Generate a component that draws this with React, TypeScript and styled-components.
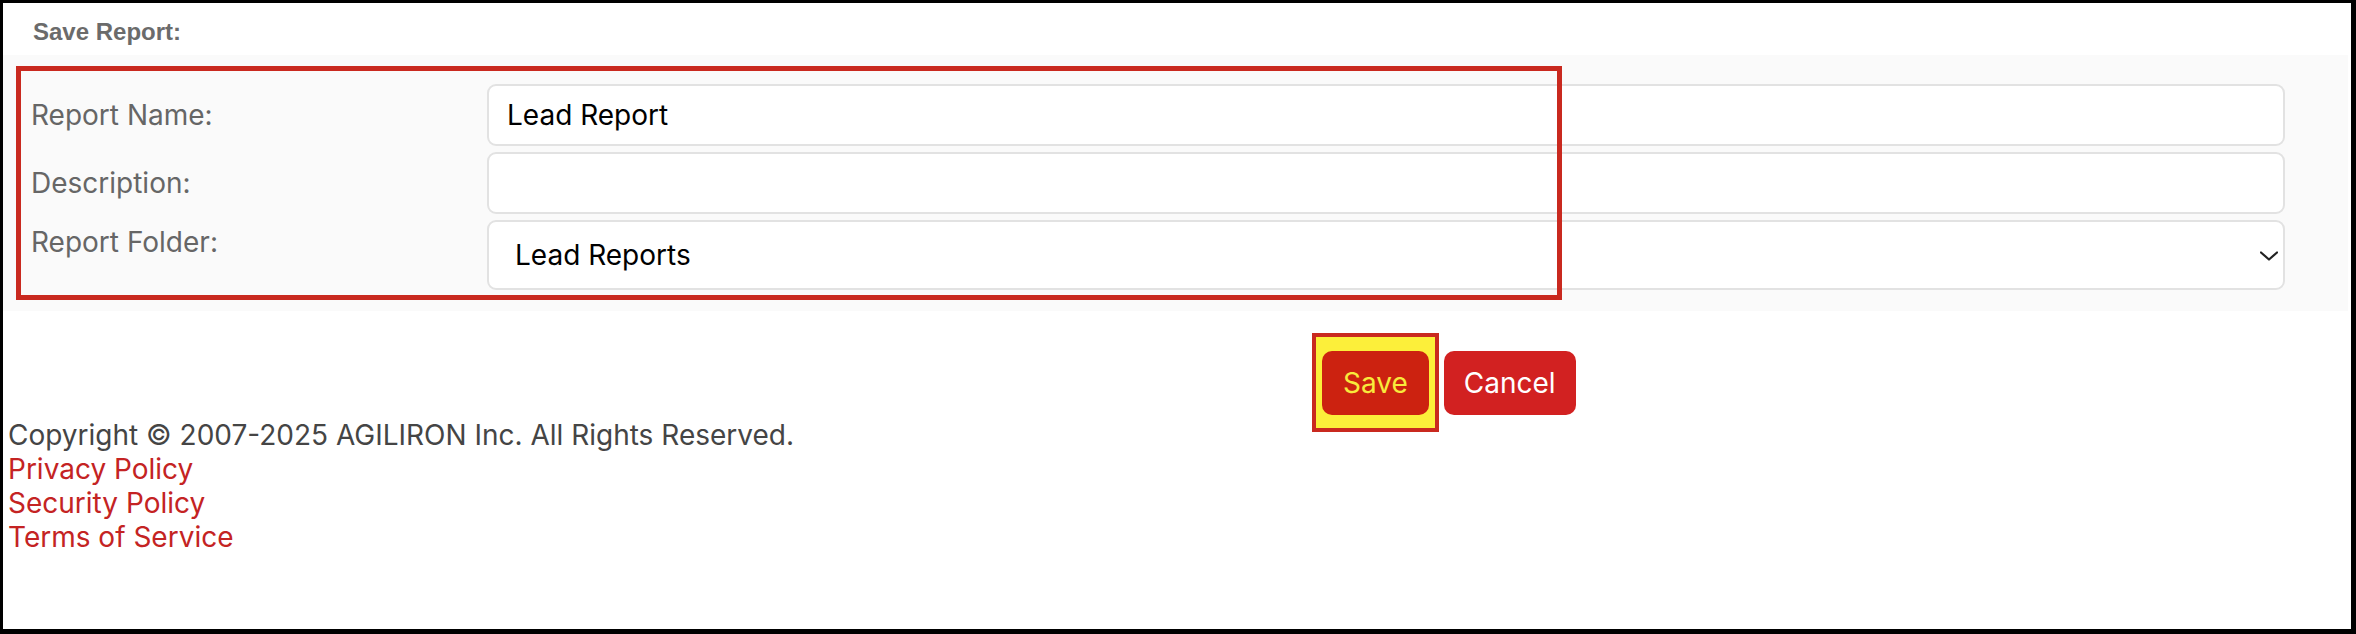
import React from 'react';
import styled, { createGlobalStyle } from 'styled-components';

const GlobalStyle = createGlobalStyle`
  html, body {
    margin: 0;
    padding: 0;
    background: #ffffff;
  }
  * {
    box-sizing: border-box;
  }
`;

const Frame = styled.div`
  width: 2356px;
  height: 634px;
  border-style: solid;
  border-color: #000000;
  border-width: 3px 5px 5px 3px;
  background: #ffffff;
  font-family: Inter, 'Noto Sans', sans-serif;
  display: flex;
  flex-direction: column;
  overflow: hidden;
`;

const Header = styled.div`
  height: 52px;
  display: flex;
  align-items: center;
  padding: 5px 0 0 30px;
  font-family: 'Liberation Sans', Arial, sans-serif;
  font-weight: 700;
  font-size: 24px;
  color: #6b6b6b;
`;

const Panel = styled.div`
  position: relative;
  margin-right: 3px;
  background: #fafafa;
  padding: 29px 63px 21px 28px;
  display: grid;
  grid-template-columns: 456px 1fr;
  row-gap: 6px;
`;

const Highlight = styled.div`
  position: absolute;
  top: 11px;
  left: 13px;
  width: 1546px;
  height: 234px;
  border: 5px solid #c9291f;
  pointer-events: none;
`;

const Label = styled.label<{ $top?: boolean }>`
  font-size: 28px;
  line-height: 34px;
  color: #666666;
  align-self: ${p => (p.$top ? 'start' : 'center')};
  margin-top: ${p => (p.$top ? '5px' : '0')};
`;

const TextInput = styled.input`
  height: 62px;
  width: 100%;
  border: 2px solid #e2e2e2;
  border-radius: 9px;
  background: #ffffff;
  padding: 0 18px;
  font-family: Inter, sans-serif;
  font-size: 28px;
  color: #000000;
  outline: none;
`;

const SelectWrap = styled.div`
  position: relative;
  height: 70px;
`;

const Select = styled.select`
  appearance: none;
  -webkit-appearance: none;
  width: 100%;
  height: 100%;
  border: 2px solid #e2e2e2;
  border-radius: 9px;
  background: #ffffff;
  padding: 0 26px;
  font-family: Inter, sans-serif;
  font-size: 28px;
  color: #000000;
  outline: none;
`;

const Chevron = styled.svg`
  position: absolute;
  right: 7px;
  top: 31px;
  width: 18px;
  height: 10px;
  pointer-events: none;
`;

const ButtonRow = styled.div`
  display: flex;
  gap: 15px;
  margin-top: 40px;
  padding-left: 1319px;
`;

const SaveMark = styled.span`
  position: relative;
  display: inline-flex;

  &::before {
    content: '';
    position: absolute;
    inset: -18px -10px -17px -10px;
    background: #fcef3a;
    border: 4px solid #c9291f;
  }
`;

const Button = styled.button<{ $primary?: boolean }>`
  position: relative;
  height: 64px;
  padding: 0 ${p => (p.$primary ? '21px' : '20px')};
  border: none;
  border-radius: 10px;
  background: ${p => (p.$primary ? '#cc2210' : '#d22121')};
  color: ${p => (p.$primary ? '#f8ea3c' : '#ffffff')};
  font-family: Inter, sans-serif;
  font-size: 28px;
  cursor: pointer;
`;

const Footer = styled.div`
  margin-top: 3px;
  padding-left: 5px;
  display: flex;
  flex-direction: column;
  font-size: 28px;
  line-height: 34px;
  position: relative;
`;

const Copyright = styled.div`
  color: #454545;
`;

const FooterLink = styled.a`
  color: #c42323;
  text-decoration: none;
`;

const App: React.FC = () => {
  return (
    <>
      <GlobalStyle />
      <Frame>
        <Header>Save Report:</Header>
        <Panel>
          <Label htmlFor="reportName">Report Name:</Label>
          <TextInput id="reportName" defaultValue="Lead Report" />
          <Label htmlFor="description">Description:</Label>
          <TextInput id="description" defaultValue="" />
          <Label htmlFor="folder" $top>Report Folder:</Label>
          <SelectWrap>
            <Select id="folder" defaultValue="lead">
              <option value="lead">Lead Reports</option>
              <option value="account">Account Reports</option>
            </Select>
            <Chevron viewBox="0 0 18 10" fill="none">
              <path d="M1 1.5l8 7 8-7" stroke="#222" strokeWidth="2.2" strokeLinecap="round" strokeLinejoin="round" />
            </Chevron>
          </SelectWrap>
          <Highlight />
        </Panel>
        <ButtonRow>
          <SaveMark>
            <Button $primary>Save</Button>
          </SaveMark>
          <Button>Cancel</Button>
        </ButtonRow>
        <Footer>
          <Copyright>Copyright © 2007-2025 AGILIRON Inc. All Rights Reserved.</Copyright>
          <FooterLink href="#">Privacy Policy</FooterLink>
          <FooterLink href="#">Security Policy</FooterLink>
          <FooterLink href="#">Terms of Service</FooterLink>
        </Footer>
      </Frame>
    </>
  );
};

export default App;
